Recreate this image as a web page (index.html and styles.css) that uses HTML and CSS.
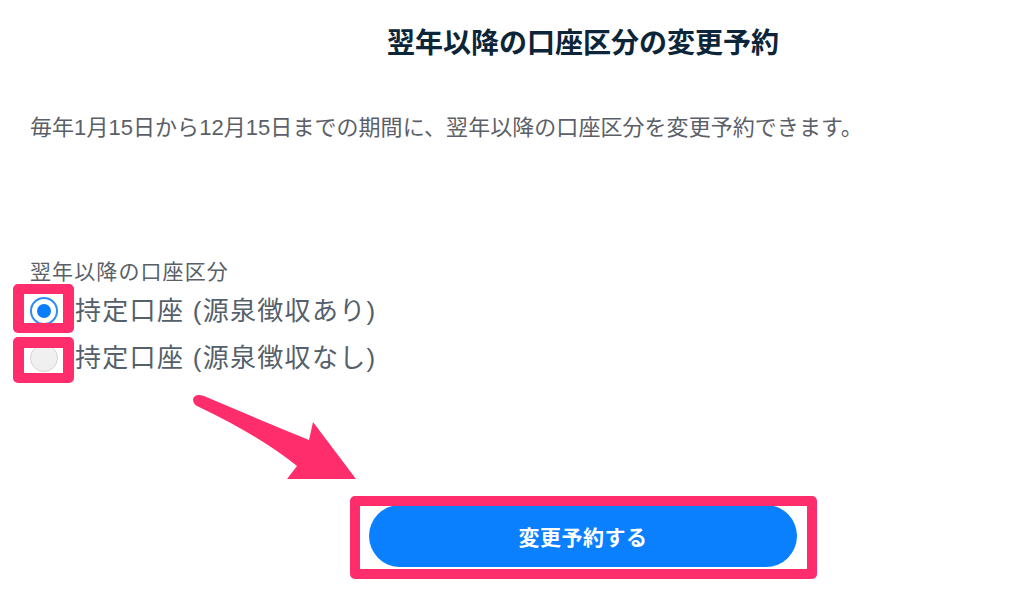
FILE: index.html
```html
<!DOCTYPE html>
<html lang="ja">
<head>
<meta charset="utf-8">
<title>翌年以降の口座区分の変更予約</title>
<link rel="stylesheet" href="styles.css">
</head>
<body>
<main class="page">
  <h1 class="title">翌年以降の口座区分の変更予約</h1>
  <p class="desc">毎年1月15日から12月15日までの期間に、翌年以降の口座区分を変更予約できます。</p>
  <div class="field">
    <div class="field-label">翌年以降の口座区分</div>
    <label class="option">
      <span class="radio radio-on"><span class="dot"></span></span>
      <span class="option-text">持定口座 (源泉徴収あり)</span>
    </label>
    <label class="option">
      <span class="radio radio-off"></span>
      <span class="option-text">持定口座 (源泉徴収なし)</span>
    </label>
  </div>
  <div class="actions">
    <button class="submit" type="button">変更予約する</button>
  </div>
</main>
<div class="annotations">
  <div class="mark mark-r1"></div>
  <div class="mark mark-r2"></div>
  <div class="mark mark-btn"></div>
  <svg class="arrow" width="1024" height="593" viewBox="0 0 1024 593">
    <path d="M193 399 Q193 405 199 407 Q258 435 297 466 L287 479 L356 479 L313 422 L309 440 Q258 419 204 396 Q195 393 193 399 Z" fill="#ff2d6b"/>
  </svg>
</div>
</body>
</html>
```
FILE: styles.css
```css
html, body {
  margin: 0;
  padding: 0;
  background: #ffffff;
}
body {
  width: 1024px;
  height: 593px;
  overflow: hidden;
  position: relative;
  font-family: "Liberation Sans", "Noto Sans CJK JP", sans-serif;
}
.page {
  padding: 25px 0 0 30px;
  display: flex;
  flex-direction: column;
}
.title {
  margin: 0 0 0 112px;
  font-family: "Noto Sans CJK JP", sans-serif;
  font-size: 28px;
  line-height: 32px;
  font-weight: 700;
  color: #0d2538;
  text-align: center;
}
.desc {
  margin: 57px 0 0 0;
  font-size: 22px;
  line-height: 28px;
  letter-spacing: 0.05px;
  color: #5b6068;
}
.field {
  margin-top: 117px;
  display: flex;
  flex-direction: column;
}
.field-label {
  font-size: 21px;
  line-height: 26px;
  letter-spacing: 1.1px;
  color: #595f66;
  margin-bottom: 6px;
}
.option {
  display: flex;
  align-items: center;
  gap: 17px;
  height: 40px;
  margin-bottom: 7px;
}
.radio {
  width: 28px;
  height: 28px;
  box-sizing: border-box;
  border-radius: 50%;
  display: flex;
  align-items: center;
  justify-content: center;
}
.radio-on {
  border: 2px solid #2d8cf6;
  background: #ffffff;
}
.radio-on .dot {
  width: 14px;
  height: 14px;
  border-radius: 50%;
  background: #0a7dff;
}
.radio-off {
  border: 1px solid #d4d4d4;
  background: #f0f0f0;
}
.option-text {
  font-size: 26px;
  line-height: 40px;
  letter-spacing: 1.3px;
  color: #55606b;
}
.actions {
  margin: 120px 0 0 112px;
  display: flex;
  justify-content: center;
}
.submit {
  width: 428px;
  height: 62px;
  border: none;
  border-radius: 31px;
  background: #0a80ff;
  color: #ffffff;
  font-family: "Noto Sans CJK JP", sans-serif;
  font-size: 21px;
  font-weight: 700;
  letter-spacing: 0.5px;
}
.annotations {
  position: absolute;
  left: 0;
  top: 0;
  width: 1024px;
  height: 593px;
  pointer-events: none;
}
.mark {
  position: absolute;
  box-sizing: border-box;
  border: 11px solid #ff2d6b;
  border-radius: 5px;
}
.mark-r1 {
  left: 13px;
  top: 284px;
  width: 61px;
  height: 49px;
  border-width: 10px 11px;
}
.mark-r2 {
  left: 13px;
  top: 337px;
  width: 61px;
  height: 46px;
  border-width: 11px 11px 10px;
}
.mark-btn {
  left: 350px;
  top: 496px;
  width: 467px;
  height: 83px;
  border-width: 10px;
}
.arrow {
  position: absolute;
  left: 0;
  top: 0;
}
```
